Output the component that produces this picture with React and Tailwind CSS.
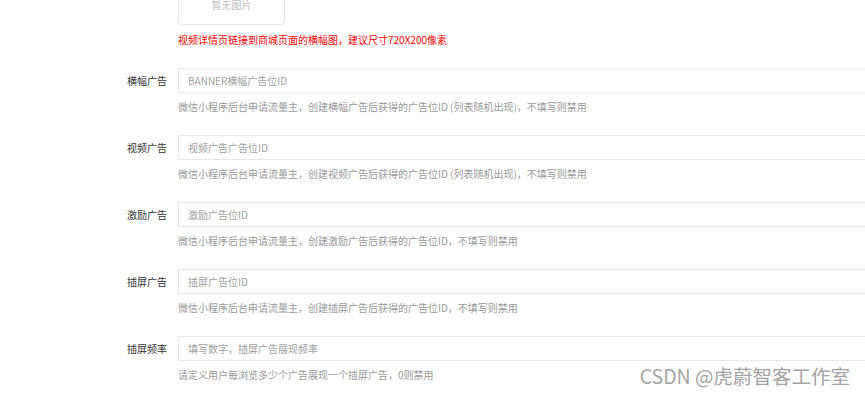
const rows = [
  {
    label: "横幅广告",
    placeholder: "BANNER横幅广告位ID",
    help: "微信小程序后台申请流量主，创建横幅广告后获得的广告位ID (列表随机出现)，不填写则禁用",
  },
  {
    label: "视频广告",
    placeholder: "视频广告广告位ID",
    help: "微信小程序后台申请流量主，创建视频广告后获得的广告位ID (列表随机出现)，不填写则禁用",
  },
  {
    label: "激励广告",
    placeholder: "激励广告位ID",
    help: "微信小程序后台申请流量主，创建激励广告后获得的广告位ID，不填写则禁用",
  },
  {
    label: "插屏广告",
    placeholder: "插屏广告位ID",
    help: "微信小程序后台申请流量主，创建插屏广告后获得的广告位ID，不填写则禁用",
  },
  {
    label: "插屏频率",
    placeholder: "填写数字，插屏广告展现频率",
    help: "请定义用户每浏览多少个广告展现一个插屏广告，0则禁用",
  },
];

const font = "font-['Noto_Sans_CJK_SC','Noto_Sans',sans-serif]";

const App = () => {
  return (
    <div className={`relative w-[865px] h-[395px] overflow-hidden bg-white ${font}`}>
      {/* image upload box, cut off at the top */}
      <div className="pl-[178px]">
        <div className="mt-[-17px] h-[42px] w-[107px] flex items-center justify-center border border-[#e4e4e4] rounded-[4px] text-[10px] text-[#c0c0c0]">
          暂无图片
        </div>
        <p className="mt-[8px] text-[10px] leading-[14px] text-[#f00]">
          视频详情页链接到商城页面的横幅图，建议尺寸720X200像素
        </p>
      </div>

      <div className="mt-[21px]">
        {rows.map((row) => (
          <div key={row.label} className="mb-[21px]">
            <div className="flex items-center">
              <label className="w-[178px] shrink-0 pr-[11px] text-right text-[10px] text-[#333]">
                {row.label}
              </label>
              <input
                className="h-[25px] w-[720px] shrink-0 border border-[#e6e6e6] px-[9px] text-[10px] text-[#333] placeholder:text-[#a0a0a0] outline-none"
                placeholder={row.placeholder}
              />
            </div>
            <p className="mt-[7px] pl-[178px] text-[10px] leading-[14px] text-[#999]">
              {row.help}
            </p>
          </div>
        ))}
      </div>

      {/* watermark */}
      <div className="absolute right-[15px] top-[364px] text-[19.5px] leading-[24px] text-[#a3a3a3]">
        CSDN @虎蔚智客工作室
      </div>
    </div>
  );
};

export default App;
